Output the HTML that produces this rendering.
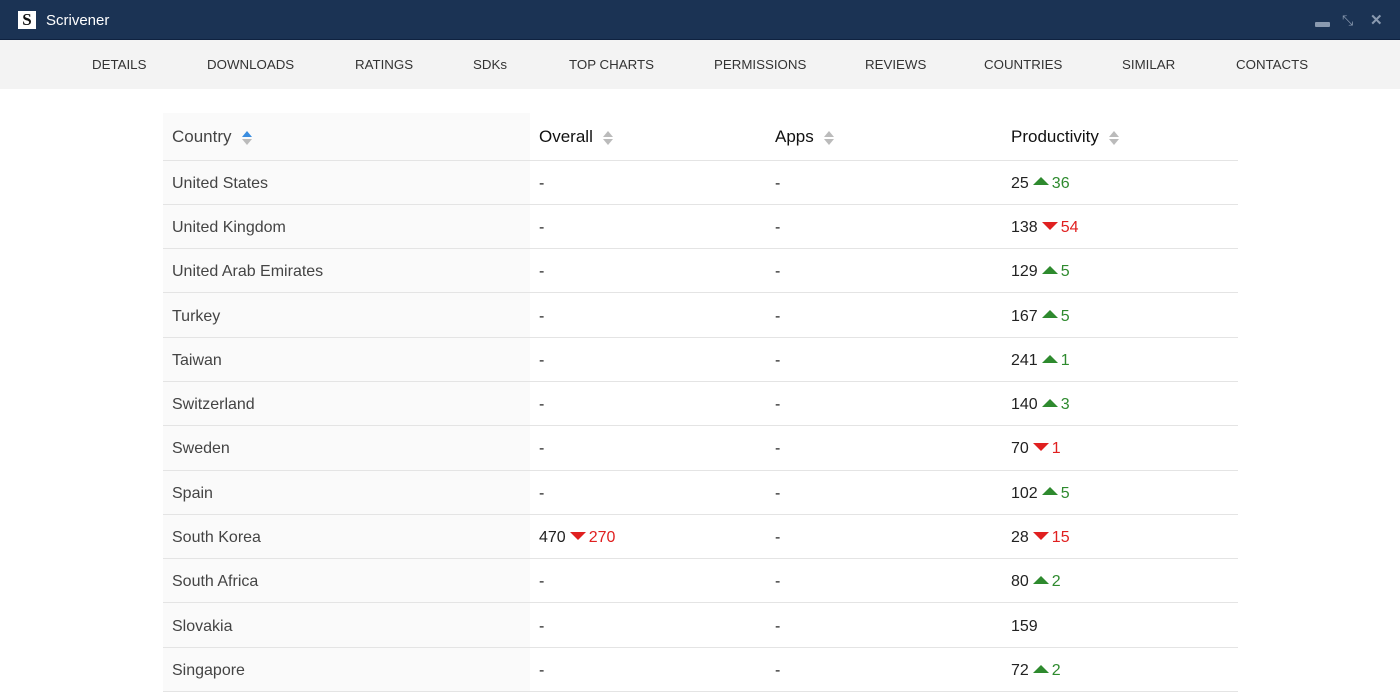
<!DOCTYPE html>
<html><head><style>
*{margin:0;padding:0;box-sizing:border-box}
body{width:1400px;height:670px;overflow:hidden;background:#fff;font-family:"Liberation Sans",sans-serif;}
.tb{height:40px;background:#1b3354;position:relative;border-bottom:1px solid #0f2240}
.logo{position:absolute;left:18px;top:11px;width:18px;height:18px;background:#fff;color:#111;font:bold 17px/18px "Liberation Serif",serif;text-align:center}
.title{position:absolute;left:46px;top:12px;color:#fff;font-size:15px}
.nav{height:49px;background:#f3f3f3;position:relative;font-size:13.3px;color:#333}
.nav span{position:absolute;top:17px}
table{position:absolute;left:163px;top:113px;width:1075px;border-collapse:collapse;font-size:16px;color:#222}
td,th{height:44.3px;padding:3px 0 0 9px;text-align:left;font-weight:normal;border-bottom:1px solid #e4e4e4}
th{height:47px;color:#111;font-size:17px;padding-top:2px}
td:first-child,th:first-child{background:#fafafa;color:#444}
.s{display:inline-block;vertical-align:middle;margin-left:10px;width:10px;height:16px;position:relative}
.s:before{content:"";position:absolute;top:1px;left:0;border:5px solid transparent;border-bottom:6px solid #bbb;border-top:0}
.s:after{content:"";position:absolute;top:9px;left:0;border:5px solid transparent;border-top:6px solid #bbb;border-bottom:0}
.s.b:before{border-bottom-color:#3a8de0}
.u,.d{display:inline-block;width:0;height:0;border:8px solid transparent;margin:0 3px 0 4px;vertical-align:middle}
.u{border-bottom:8px solid #2e8a2e;border-top:0;position:relative;top:-2px}
.d{border-top:8px solid #e02020;border-bottom:0;position:relative;top:-2px}
.g{color:#2e8a2e}.r{color:#e02020}
</style></head><body>
<div class="tb"><div class="logo">S</div><div class="title">Scrivener</div>
<div style="position:absolute;left:1315px;top:22px;width:15px;height:5px;background:#8a9ab0;border-radius:1px"></div>
<div style="position:absolute;left:1342px;top:12px;color:#8a9ab0;font-size:14px">⤡</div>
<div style="position:absolute;left:1370px;top:11px;color:#8a9ab0;font-size:15px;font-weight:bold">✕</div></div>
<div class="nav">
<span style="left:92px">DETAILS</span><span style="left:207px">DOWNLOADS</span><span style="left:355px">RATINGS</span><span style="left:473px">SDKs</span><span style="left:569px">TOP CHARTS</span><span style="left:714px">PERMISSIONS</span><span style="left:865px">REVIEWS</span><span style="left:984px">COUNTRIES</span><span style="left:1122px">SIMILAR</span><span style="left:1236px">CONTACTS</span></div>
<table>
<colgroup><col style="width:367px"><col style="width:236px"><col style="width:236px"><col></colgroup>
<tr><th>Country<span class="s b"></span></th><th>Overall<span class="s"></span></th><th>Apps<span class="s"></span></th><th>Productivity<span class="s"></span></th></tr>
<tr><td>United States</td><td>-</td><td>-</td><td>25<i class="u"></i><span class="g">36</span></td></tr>
<tr><td>United Kingdom</td><td>-</td><td>-</td><td>138<i class="d"></i><span class="r">54</span></td></tr>
<tr><td>United Arab Emirates</td><td>-</td><td>-</td><td>129<i class="u"></i><span class="g">5</span></td></tr>
<tr><td>Turkey</td><td>-</td><td>-</td><td>167<i class="u"></i><span class="g">5</span></td></tr>
<tr><td>Taiwan</td><td>-</td><td>-</td><td>241<i class="u"></i><span class="g">1</span></td></tr>
<tr><td>Switzerland</td><td>-</td><td>-</td><td>140<i class="u"></i><span class="g">3</span></td></tr>
<tr><td>Sweden</td><td>-</td><td>-</td><td>70<i class="d"></i><span class="r">1</span></td></tr>
<tr><td>Spain</td><td>-</td><td>-</td><td>102<i class="u"></i><span class="g">5</span></td></tr>
<tr><td>South Korea</td><td>470<i class="d"></i><span class="r">270</span></td><td>-</td><td>28<i class="d"></i><span class="r">15</span></td></tr>
<tr><td>South Africa</td><td>-</td><td>-</td><td>80<i class="u"></i><span class="g">2</span></td></tr>
<tr><td>Slovakia</td><td>-</td><td>-</td><td>159</td></tr>
<tr><td>Singapore</td><td>-</td><td>-</td><td>72<i class="u"></i><span class="g">2</span></td></tr>
</table>
</body></html>
